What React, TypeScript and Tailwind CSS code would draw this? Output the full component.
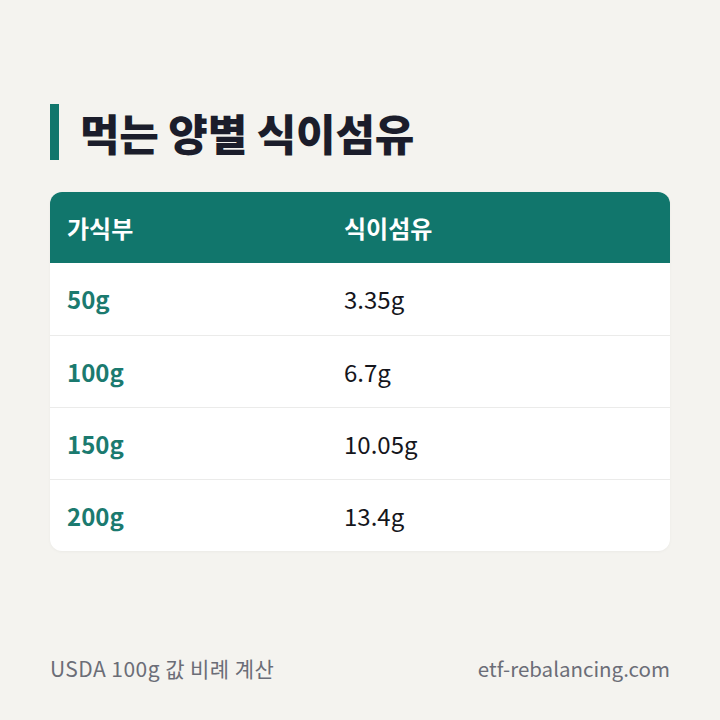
const rows = [
  { weight: "50g", fiber: "3.35g" },
  { weight: "100g", fiber: "6.7g" },
  { weight: "150g", fiber: "10.05g" },
  { weight: "200g", fiber: "13.4g" },
];

export default function App() {
  return (
    <div
      className="w-[720px] h-[720px] bg-[#f4f3ef] flex flex-col px-[50px] pt-[104px] pb-[36px]"
      style={{ fontFamily: '"Noto Sans CJK KR", "Noto Sans", sans-serif' }}
    >
      {/* Title */}
      <div className="flex items-center gap-[21px] h-[56px]">
        <div className="w-[9px] h-[56px] bg-[#11766c]" />
        <h1 className="text-[43px] font-extrabold text-[#1b1d2b] tracking-[-0.2px] leading-none">
          먹는 양별 식이섬유
        </h1>
      </div>

      {/* Table */}
      <div className="mt-[32px] rounded-[12px] overflow-hidden bg-white shadow-[0_1px_3px_rgba(0,0,0,0.04)]">
        <div className="flex items-center h-[71px] bg-[#11766c] text-white text-[24px] font-bold">
          <div className="w-[45%] pl-[17px]">가식부</div>
          <div className="flex-1 pl-[15px]">식이섬유</div>
        </div>
        {rows.map((r, i) => (
          <div
            key={r.weight}
            className={`flex items-center h-[72px] text-[24px] ${i > 0 ? "border-t border-[#ebebea]" : ""}`}
          >
            <div className="w-[45%] pl-[17px] font-bold text-[#1b7a6f]">{r.weight}</div>
            <div className="flex-1 pl-[15px] text-[#15161c]">{r.fiber}</div>
          </div>
        ))}
      </div>

      {/* Footer */}
      <div className="mt-auto flex items-center justify-between text-[#6b6d77]">
        <span className="text-[21px] tracking-[0.45px]">USDA 100g 값 비례 계산</span>
        <span className="text-[20.5px]">etf-rebalancing.com</span>
      </div>
    </div>
  );
}
